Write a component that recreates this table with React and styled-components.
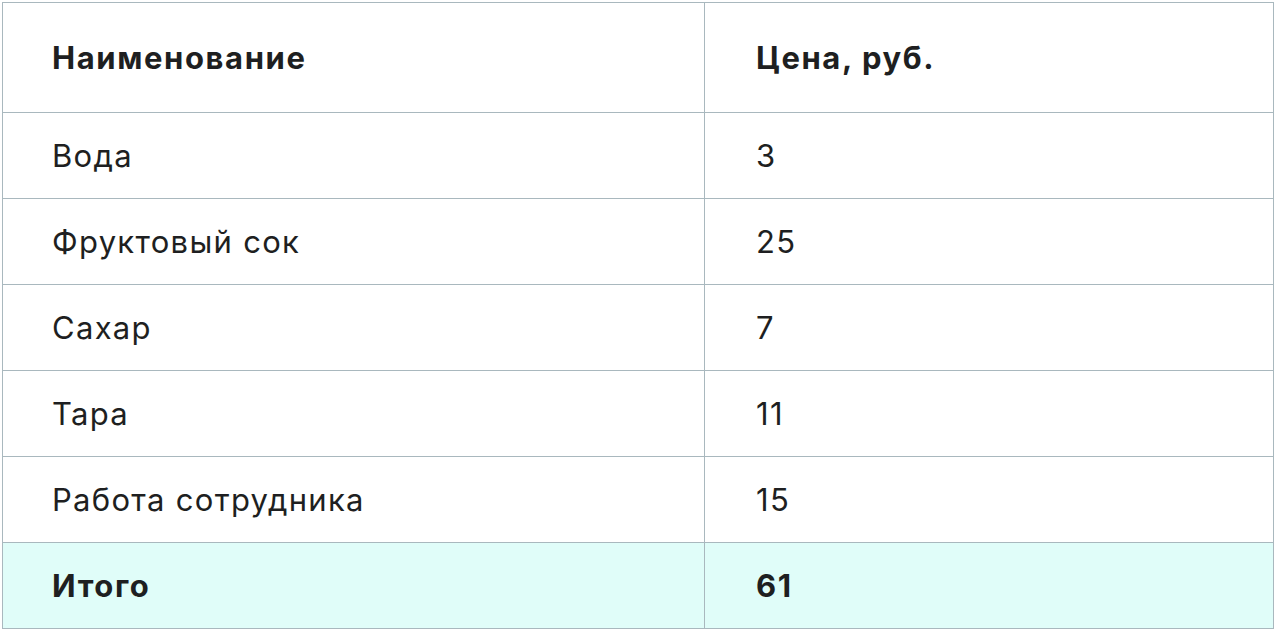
import React from "react"
import styled, { createGlobalStyle } from "styled-components"

const GlobalStyle = createGlobalStyle`
  html, body {
    margin: 0;
    padding: 0;
    background: #ffffff;
  }
  body {
    font-family: Inter, "Noto Sans", sans-serif;
    color: #1e1f21;
  }
`

const Wrap = styled.div`
  padding: 2px 2px 0 2px;
`

const Table = styled.table`
  width: 1272px;
  border-collapse: collapse;
  table-layout: fixed;
  border: 1px solid #9eaeb5;
`

const Cell = styled.td`
  height: ${props => (props.$head ? 109 : 85)}px;
  padding: 0 0 0 ${props => (props.$price ? 51 : 49)}px;
  border: 1px solid #a9b8be;
  font-size: 31px;
  font-weight: ${props => (props.$bold ? 700 : 400)};
  letter-spacing: ${props => (props.$bold ? 1.6 : 1.3)}px;
  text-align: left;
  vertical-align: middle;
  background: ${props => (props.$total ? "#e0fdf9" : "transparent")};
`

const rows = [
  ["Вода", "3"],
  ["Фруктовый сок", "25"],
  ["Сахар", "7"],
  ["Тара", "11"],
  ["Работа сотрудника", "15"],
]

function App() {
  return (
    <Wrap>
      <GlobalStyle />
      <Table>
        <colgroup>
          <col style={{ width: 702 }} />
          <col />
        </colgroup>
        <thead>
          <tr>
            <Cell as="th" $head $bold>Наименование</Cell>
            <Cell as="th" $head $bold $price>Цена, руб.</Cell>
          </tr>
        </thead>
        <tbody>
          {rows.map(([name, price]) => (
            <tr key={name}>
              <Cell>{name}</Cell>
              <Cell $price>{price}</Cell>
            </tr>
          ))}
          <tr>
            <Cell $bold $total>Итого</Cell>
            <Cell $bold $total $price>61</Cell>
          </tr>
        </tbody>
      </Table>
    </Wrap>
  )
}

export default App
